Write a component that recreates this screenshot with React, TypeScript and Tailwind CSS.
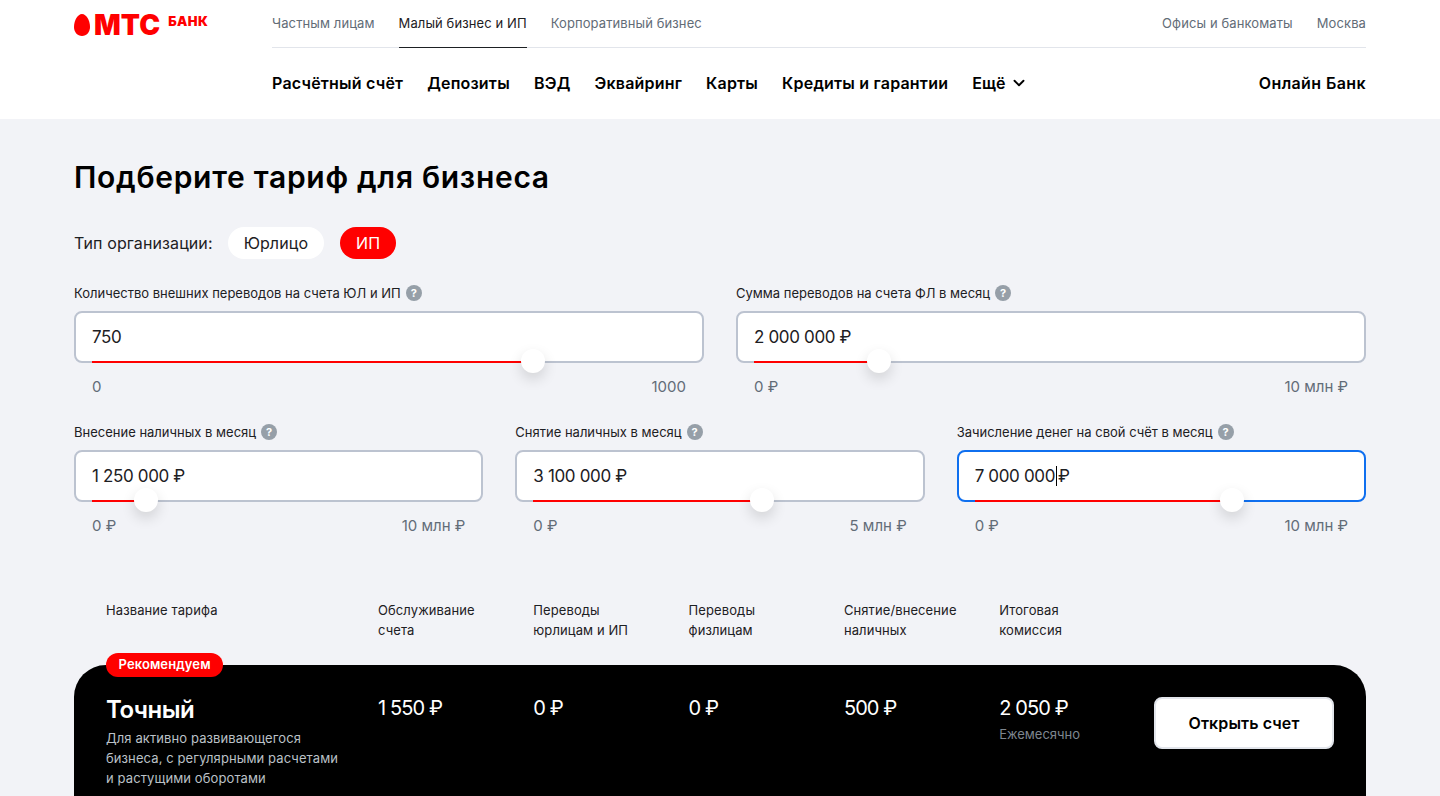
import { ChevronDown } from "lucide-react";

const topTabs = [
  { label: "Частным лицам", active: false },
  { label: "Малый бизнес и ИП", active: true },
  { label: "Корпоративный бизнес", active: false },
];

const navLinks = ["Расчётный счёт", "Депозиты", "ВЭД", "Эквайринг", "Карты", "Кредиты и гарантии"];

const columns = [
  ["Название тарифа"],
  ["Обслуживание", "счета"],
  ["Переводы", "юрлицам и ИП"],
  ["Переводы", "физлицам"],
  ["Снятие/внесение", "наличных"],
  ["Итоговая", "комиссия"],
];

interface FieldProps {
  label: string;
  value: string;
  ratio: number;
  min: string;
  max: string;
  focused?: boolean;
  caret?: [string, string];
}

function Field({ label, value, ratio, min, max, focused, caret }: FieldProps) {
  return (
    <div className="min-w-0">
      <div className="flex h-5 items-center gap-[5px] text-[13px] leading-5 text-[#1d2023]">
        <span>{label}</span>
        <span className="flex h-4 w-4 items-center justify-center rounded-full bg-[#969fa8] text-[11px] font-bold text-white">
          ?
        </span>
      </div>
      <div
        className={
          "relative mt-2 h-[52px] rounded-lg border-2 bg-white px-4 text-[17px] leading-[48px] tracking-[-0.35px] text-[#1d2023] " +
          (focused ? "border-[#0f6fef]" : "border-[#bcc3d0]")
        }
      >
        {caret ? (
          <span className="flex">
            {caret[0]}
            <span className="my-auto ml-px h-5 w-px bg-black" />
            <span className="ml-[1px]">{caret[1]}</span>
          </span>
        ) : (
          value
        )}
        <div className="absolute right-4 bottom-[-2px] left-4 h-0.5">
          <div
            className="h-full bg-[#ff0000]"
            style={{ width: `calc(${ratio} * (100% - 20px) + 10px)` }}
          />
          <div
            className="absolute top-[-12px] h-6 w-6 rounded-full bg-white shadow-[0_6px_14px_rgba(0,0,0,0.14)]"
            style={{ left: `calc(${ratio} * (100% - 20px) - 2px)` }}
          />
        </div>
      </div>
      <div className="mt-[14px] flex justify-between px-[18px] text-[15px] leading-5 text-[#626c77]">
        <span>{min}</span>
        <span>{max}</span>
      </div>
    </div>
  );
}

function Logo() {
  return (
    <div className="flex w-[198px] items-start pt-[14px] text-[#ff0000]">
      <svg width="16" height="22" viewBox="0 0 16 22" className="shrink-0">
        <path d="M8 0C3.6 0 0 6.600 0 13c0 5 3.400 9 8 9s8-4 8-9C16 6.600 12.400 0 8 0z" fill="#ff0000" />
      </svg>
      <span className="ml-1 text-[28px] leading-[22px] font-black tracking-[0.1px]">МТС</span>
      <span className="ml-2 text-[13px] leading-[14px] font-black tracking-[0.4px]">БАНК</span>
    </div>
  );
}

export default function App() {
  return (
    <div className="h-[796px] overflow-hidden bg-[#f2f3f7] [font-family:Inter,sans-serif]">
      <header className="flex h-[119px] bg-white px-[74px]">
        <Logo />
        <div className="flex-1">
          <div className="flex h-12 items-stretch justify-between border-b border-[#e2e5eb] text-[13px] tracking-[0.1px]">
            <div className="flex gap-6">
              {topTabs.map((tab) => (
                <a
                  key={tab.label}
                  className={
                    "-mb-px flex h-12 items-center " +
                    (tab.active ? "border-b border-[#1d2023] text-[#1d2023]" : "text-[#626c77]")
                  }
                >
                  {tab.label}
                </a>
              ))}
            </div>
            <div className="flex items-center gap-6 text-[#626c77]">
              <a>Офисы и банкоматы</a>
              <a>Москва</a>
            </div>
          </div>
          <nav className="flex h-[70px] items-center justify-between text-[16px] font-semibold tracking-[0.2px] text-black">
            <div className="flex items-center gap-6">
              {navLinks.map((link) => (
                <a key={link}>{link}</a>
              ))}
              <a className="flex items-center gap-1">
                Ещё <ChevronDown size={18} strokeWidth={2.5} />
              </a>
            </div>
            <a className="tracking-[0.4px]">Онлайн Банк</a>
          </nav>
        </div>
      </header>

      <main className="px-[74px]">
        <h1 className="mt-[38px] text-[30px] leading-10 font-semibold tracking-[0.7px] text-black">
          Подберите тариф для бизнеса
        </h1>

        <div className="mt-[30px] flex items-center text-[16px] tracking-[0.1px]">
          <span className="text-[#1d2023]">Тип организации:</span>
          <button className="ml-[15px] h-8 rounded-full bg-white px-4 text-[#1d2023]">Юрлицо</button>
          <button className="ml-4 h-8 rounded-full bg-[#ff0000] px-4 text-white">ИП</button>
        </div>

        <div className="mt-6 grid grid-cols-2 gap-8">
          <Field
            label="Количество внешних переводов на счета ЮЛ и ИП"
            value="750"
            ratio={0.75}
            min="0"
            max="1000"
          />
          <Field
            label="Сумма переводов на счета ФЛ в месяц"
            value="2 000 000 ₽"
            ratio={0.2}
            min="0 ₽"
            max="10 млн ₽"
          />
        </div>

        <div className="mt-[25px] grid grid-cols-3 gap-8">
          <Field
            label="Внесение наличных в месяц"
            value="1 250 000 ₽"
            ratio={0.125}
            min="0 ₽"
            max="10 млн ₽"
          />
          <Field
            label="Снятие наличных в месяц"
            value="3 100 000 ₽"
            ratio={0.62}
            min="0 ₽"
            max="5 млн ₽"
          />
          <Field
            label="Зачисление денег на свой счёт в месяц"
            value="7 000 000 ₽"
            caret={["7 000 000", "₽"]}
            ratio={0.7}
            min="0 ₽"
            max="10 млн ₽"
            focused
          />
        </div>

        <div className="mt-16 grid grid-cols-[272px_155.3px_155.3px_155.3px_155.3px_1fr] pl-8 text-[13px] leading-5 tracking-[0.1px] text-[#1d2023]">
          {columns.map((col) => (
            <div key={col[0]} className="pr-2">
              {col.map((line) => (
                <div key={line}>{line}</div>
              ))}
            </div>
          ))}
        </div>

        <div className="relative mt-[25px] h-[220px] rounded-t-[32px] bg-black pt-8 pr-8 pl-8 text-white">
          <span className="absolute top-[-12px] left-8 flex h-6 items-center rounded-full bg-[#ff0000] px-[12.5px] text-[13px] font-semibold tracking-[0.1px]">
            Рекомендуем
          </span>
          <div className="grid grid-cols-[272px_155.3px_155.3px_155.3px_155.3px_1fr]">
            <div>
              <div className="-mt-px text-[24px] leading-7 font-semibold tracking-[-0.5px]">Точный</div>
              <p className="mt-1 text-[13px] leading-5 tracking-[0.1px] text-[#bbc1c7]">
                Для активно развивающегося
                <br />
                бизнеса, с регулярными расчетами
                <br />
                и растущими оборотами
              </p>
            </div>
            <div className="-mt-px text-[20px] leading-6 tracking-[-0.9px]">1 550 ₽</div>
            <div className="-mt-px text-[20px] leading-6 tracking-[-0.9px]">0 ₽</div>
            <div className="-mt-px text-[20px] leading-6 tracking-[-0.9px]">0 ₽</div>
            <div className="-mt-px text-[20px] leading-6 tracking-[-0.9px]">500 ₽</div>
            <div className="flex justify-between">
              <div>
                <div className="-mt-px text-[20px] leading-6 tracking-[-0.9px]">2 050 ₽</div>
                <div className="mt-1 text-[13px] leading-5 text-[#7e868f]">Ежемесячно</div>
              </div>
              <button className="h-[52px] w-[180px] rounded-lg border-2 border-[#e2e5eb] bg-white text-[16px] font-semibold tracking-[0.1px] text-black">
                Открыть счет
              </button>
            </div>
          </div>
        </div>
      </main>
    </div>
  );
}
